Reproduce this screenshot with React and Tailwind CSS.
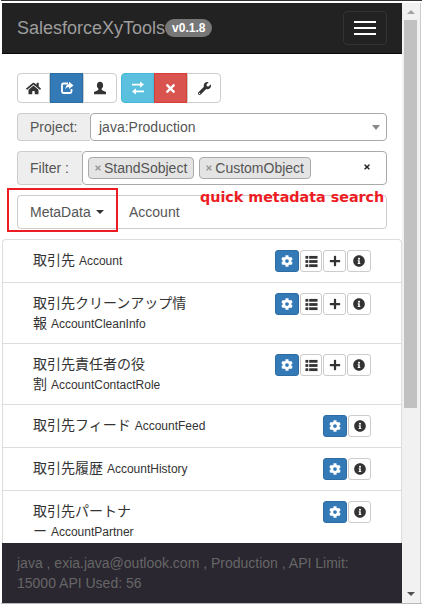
import React from "react";
import { FaHome, FaTimes, FaWrench, FaCog, FaPlus, FaInfoCircle } from "react-icons/fa";

const User = () => (
  <svg viewBox="0 0 14 14" className="w-[14px] h-[14px]" fill="#333">
    <path d="M7 .8C5 .8 3.9 2.4 3.9 4.4c0 1.3.6 2.5 1.4 3.2v1.3L1 10.9v2.3h12v-2.3L8.7 8.9V7.6c.8-.7 1.4-1.9 1.4-3.2C10.100 2.400 9 .8 7 .8z" />
  </svg>
);
const Share = () => (
  <svg viewBox="0 0 14 14" className="w-[14px] h-[14px]" fill="none">
    <path d="M8 2.500H3.500a1.500 1.500 0 0 0-1.500 1.500v6.500a1.500 1.500 0 0 0 1.500 1.500H10a1.500 1.500 0 0 0 1.500-1.500V8" stroke="#fff" strokeWidth="1.800" />
    <path d="M9 .8l4.500 3.600L9 8V6c-2 0-3 .8-3.500 2.500C5.300 5.500 6.800 3.300 9 3z" fill="#fff" />
  </svg>
);
const Transfer = () => (
  <svg viewBox="0 0 14 14" className="w-[14px] h-[14px]" fill="#fff">
    <path d="M1 3.300h8V1l4 3.200-4 3.200V5.200H1z" transform="translate(0 -.6)" />
    <path d="M13 10.700H5V13L1 9.800l4-3.200v2.200h8z" transform="translate(0 .6)" />
  </svg>
);
const ThList = () => (
  <svg viewBox="0 0 14 14" className="w-[13px] h-[13px]" fill="#333">
    <rect x="0.500" y="1" width="3" height="3" />
    <rect x="4.500" y="1" width="9" height="3" />
    <rect x="0.500" y="5.500" width="3" height="3" />
    <rect x="4.500" y="5.500" width="9" height="3" />
    <rect x="0.500" y="10" width="3" height="3" />
    <rect x="4.500" y="10" width="9" height="3" />
  </svg>
);

const Row = ({ title, tail, sub, tall, full }) => (
  <div className={`flex justify-between items-start border-b border-[#ddd] px-[30px] py-[10px] ${tall ? "h-[61px]" : "h-[43px]"}`}>
    <div className="text-[14px] leading-[20px] text-[#333] whitespace-nowrap">
      {title}
      {tail ? (
        <>
          <br />
          {tail}
        </>
      ) : null}{" "}
      <span className="text-[12px]">{sub}</span>
    </div>
    <div className="flex gap-px">
      <button className="w-[24px] h-[22px] bg-[#337ab7] border border-[#2e6da4] rounded-[3px] flex items-center justify-center">
        <FaCog className="text-white text-[12px]" />
      </button>
      {full ? (
        <>
          <button className="w-[22px] h-[22px] bg-white border border-[#ccc] rounded-[3px] flex items-center justify-center">
            <ThList />
          </button>
          <button className="w-[23px] h-[22px] bg-white border border-[#ccc] rounded-[3px] flex items-center justify-center">
            <FaPlus className="text-[#333] text-[12px]" />
          </button>
        </>
      ) : null}
      <button className={`${full ? "w-[24px]" : "w-[23px]"} h-[22px] bg-white border border-[#ccc] rounded-[3px] flex items-center justify-center`}>
        <FaInfoCircle className="text-[#333] text-[12px]" />
      </button>
    </div>
  </div>
);

const Tag = ({ children }) => (
  <span className="flex items-center h-[22px] pl-[5px] pr-[6px] bg-[#e4e4e4] border border-[#aaa] rounded-[4px] text-[14px] text-[#555]">
    <FaTimes className="text-[#999] text-[8px] mr-[2px]" />
    {children}
  </span>
);

const iconBtn = "w-[33px] h-[30px] flex items-center justify-center border";

export default function App() {
  return (
    <div className="w-[423px] h-[606px] overflow-hidden bg-white flex flex-col font-['Liberation_Sans','Noto_Sans_CJK_JP',sans-serif]">
      <div className="h-px bg-[#333] mx-px shrink-0" />
      <div className="h-[2px] shrink-0" />
      <div className="flex h-[600px] shrink-0 pl-[2px] pr-[2px]">
        <div className="w-[400px] h-full flex flex-col overflow-hidden shrink-0">
          <nav className="h-[51px] shrink-0 bg-[#222] border-b border-[#080808] flex items-center justify-between pl-[15px] pr-[15px]">
            <div className="flex items-center">
              <span className="text-[18px] text-[#9d9d9d]">SalesforceXyTools</span>
              <span className="h-[18px] px-[7px] rounded-[10px] bg-[#777] text-white text-[12px] font-bold flex items-center">v0.1.8</span>
            </div>
            <button className="w-[44px] h-[34px] border border-[#333] rounded-[4px] flex flex-col items-center justify-center gap-[4px]">
              <span className="block w-[22px] h-[2px] bg-white" />
              <span className="block w-[22px] h-[2px] bg-white" />
              <span className="block w-[22px] h-[2px] bg-white" />
            </button>
          </nav>

          <div className="px-[15px] pt-[19px] shrink-0 relative h-[185px]">
            <div className="flex gap-[4px]">
              <div className="flex">
                <button className={`${iconBtn} border-[#ccc] rounded-l-[4px] bg-white`}>
                  <FaHome className="text-[#333] text-[15px]" />
                </button>
                <button className={`${iconBtn} border-[#2e6da4] bg-[#337ab7]`}>
                  <Share />
                </button>
                <button className={`${iconBtn} border-[#ccc] rounded-r-[4px] bg-white w-[34px]`}>
                  <User />
                </button>
              </div>
              <div className="flex">
                <button className={`${iconBtn} border-[#46b8da] rounded-l-[4px] bg-[#5bc0de]`}>
                  <Transfer />
                </button>
                <button className={`${iconBtn} border-[#d43f3a] bg-[#d9534f]`}>
                  <FaTimes className="text-white text-[13px]" />
                </button>
                <button className={`${iconBtn} border-[#ccc] rounded-r-[4px] bg-white w-[34px]`}>
                  <FaWrench className="text-[#333] text-[13px]" />
                </button>
              </div>
            </div>

            <div className="flex h-[28px] mt-[10px] text-[14px] text-[#555]">
              <div className="w-[73px] bg-[#eee] border border-[#ccc] border-r-0 rounded-l-[4px] pl-[12px] flex items-center">Project:</div>
              <div className="flex-1 border border-[#aaa] rounded-[4px] pl-[8px] pr-[6px] flex items-center justify-between">
                <span>java:Production</span>
                <span className="w-0 h-0 border-x-[4px] border-x-transparent border-t-[5px] border-t-[#888]" />
              </div>
            </div>

            <div className="flex h-[34px] mt-[10px] text-[14px] text-[#555]">
              <div className="w-[65px] bg-[#eee] border border-[#ccc] border-r-0 rounded-l-[4px] pl-[12px] flex items-center">Filter :</div>
              <div className="flex-1 border border-[#aaa] rounded-[4px] pl-[5px] pr-[15px] flex items-center gap-[5px]">
                <Tag>StandSobject</Tag>
                <Tag>CustomObject</Tag>
                <FaTimes className="ml-auto text-[#222] text-[8px] mb-[2px]" />
              </div>
            </div>

            <div className="flex h-[34px] mt-[10px] text-[14px] text-[#555] border border-[#ccc] rounded-[4px]">
              <div className="w-[101px] flex items-center pl-[12px] shrink-0">
                MetaData
                <span className="ml-[5px] w-0 h-0 border-x-[4px] border-x-transparent border-t-[4px] border-t-[#333]" />
              </div>
              <div className="flex items-center pl-[10px]">Account</div>
            </div>

            <div className="absolute left-[5px] top-[134px] w-[111px] h-[44px] border-2 border-[#ed1c24]" />
            <div className="absolute left-[198px] top-[134px] text-[14.300px] leading-[18px] font-bold text-[#ed1c24] whitespace-nowrap font-['DejaVu_Sans',sans-serif]">
              quick metadata search
            </div>
          </div>

          <div className="flex-1 overflow-hidden">
            <div className="border border-b-0 border-[#ddd] rounded-t-[4px]">
              <Row title="取引先" sub="Account" full />
              <Row title="取引先クリーンアップ情" tail="報" sub="AccountCleanInfo" tall full />
              <Row title="取引先責任者の役" tail="割" sub="AccountContactRole" tall full />
              <Row title="取引先フィード" sub="AccountFeed" />
              <Row title="取引先履歴" sub="AccountHistory" />
              <Row title="取引先パートナ" tail="ー" sub="AccountPartner" tall />
            </div>
          </div>

          <footer className="h-[60px] shrink-0 bg-[#2a2730] text-[#666] text-[14px] leading-[20px] px-[15px] py-[10px]">
            java , exia.java@outlook.com , Production , API Limit: 15000 API Used: 56
          </footer>
        </div>

        <div className="w-[18px] h-full bg-[#f1f1f1] flex flex-col items-center justify-between pt-[7px] pb-[7px] pl-[2px] pr-[3px] shrink-0">
          <span className="w-0 h-0 border-x-[4px] border-x-transparent border-b-[4px] border-b-[#a3a3a3]" />
          <span className="w-[13px] h-[388px] bg-[#c1c1c1] mt-[6px] mb-auto" />
          <span className="w-0 h-0 border-x-[4px] border-x-transparent border-t-[4px] border-t-[#505050]" />
        </div>
        <div className="w-px h-full bg-[#ccc] shrink-0" />
      </div>
      <div className="h-px bg-[#bbb] mx-px shrink-0" />
    </div>
  );
}
